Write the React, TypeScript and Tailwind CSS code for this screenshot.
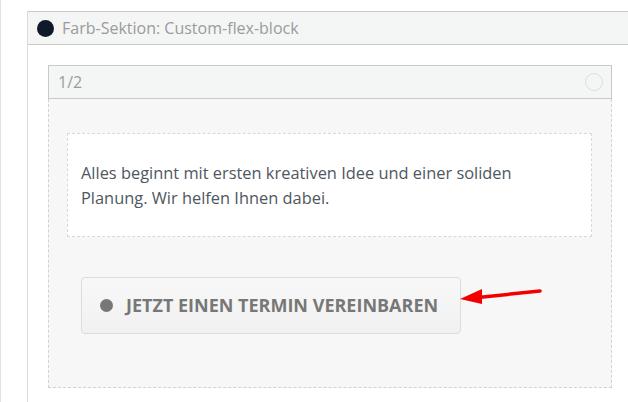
export default function App() {
  return (
    <div
      className="relative flex h-[402px] w-[628px] overflow-hidden bg-white"
      style={{ fontFamily: '"Open Sans", "Liberation Sans", sans-serif' }}
    >
      <div className="w-[27px] shrink-0 border-l border-[#e2e2e2]" />
      <div className="mt-[11px] flex flex-1 flex-col border-l border-[#dcdcdc]">
        {/* section header */}
        <div className="flex h-[34px] items-center gap-[8px] border-y border-[#c9c9c9] bg-[#f4f5f5] pl-[9px]">
          <span className="h-[17px] w-[17px] rounded-full bg-[#0e1a2b]" />
          <span className="text-[16px] text-[#9b9b9b]">Farb-Sektion: Custom-flex-block</span>
        </div>

        <div className="pl-[20px] pr-[16px] pt-[20px]">
          {/* column header */}
          <div className="flex h-[34px] items-center justify-between border border-[#c9c9c9] bg-[#f4f5f5] pl-[9px] pr-[8px]">
            <span className="text-[16px] text-[#9b9b9b]">1/2</span>
            <span className="h-[18px] w-[18px] rounded-full border border-[#dedede]" />
          </div>

          <div className="h-[289px] border-x border-b border-dashed border-[#d2d2d2] bg-[#f7f7f7] pl-[18px] pr-[19px] pt-[34px]">
            <div className="h-[104px] border border-dashed border-[#d8d8d8] bg-white px-[13px] pt-[26px] text-[16.4px] font-medium leading-[25px] text-[#50575e]">
              Alles beginnt mit ersten kreativen Idee und einer soliden
              <br />
              Planung. Wir helfen Ihnen dabei.
            </div>

            <div className="ml-[14px] mt-[40px] flex h-[57px] w-[380px] items-center gap-[13px] rounded-[4px] border border-[#dcdcdc] bg-gradient-to-b from-[#f8f8f8] to-[#f1f1f1] pl-[18px]">
              <span className="h-[13px] w-[13px] rounded-full bg-[#777777]" />
              <span className="text-[18px] font-bold text-[#777777]">
                JETZT EINEN TERMIN VEREINBAREN
              </span>
            </div>
          </div>
        </div>
      </div>

      <svg className="absolute left-0 top-0" width="628" height="402" viewBox="0 0 628 402">
        <line x1="540" y1="291" x2="478" y2="297.5" stroke="#f20000" strokeWidth="3.5" strokeLinecap="round" />
        <polygon points="460,299 482,289 482,304" fill="#f20000" />
      </svg>
    </div>
  );
}
